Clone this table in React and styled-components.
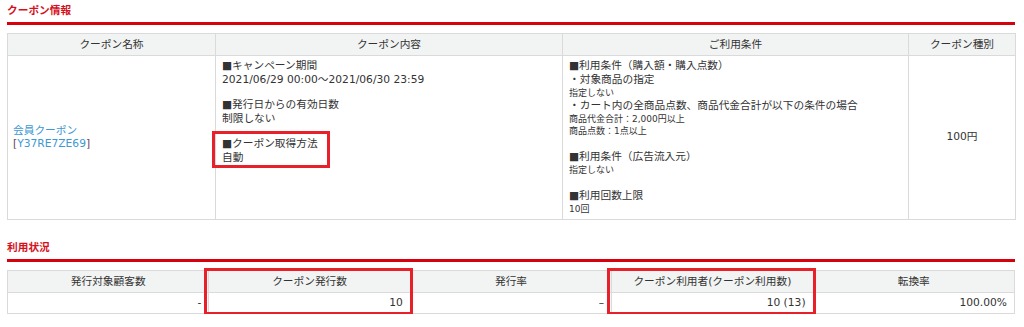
import React from "react";
import styled, { createGlobalStyle, css } from "styled-components";

const GlobalStyle = createGlobalStyle`
  html, body {
    margin: 0;
    background: #fff;
  }
  body {
    font-family: "DejaVu Sans", "Noto Sans CJK JP", sans-serif;
    color: #333;
  }
`;

const Page = styled.div`
  width: 1008px;
  padding: 4px 0 0 7px;
`;

const SectionTitle = styled.h2`
  margin: ${(p) => (p.$first ? "0" : "21px 0 0")};
  padding-bottom: 4px;
  border-bottom: 3px solid #d9000d;
  color: #d5101b;
  font-size: 10.7px;
  font-weight: bold;
  line-height: 14px;
`;

const Table = styled.table`
  width: 100%;
  margin-top: 8px;
  border-collapse: collapse;
  table-layout: fixed;
  font-size: 10.7px;
`;

const Col = styled.col`
  width: ${(p) => p.$w};
`;

const markBox = css`
  position: relative;
  &::after {
    content: "";
    position: absolute;
    left: -5px;
    right: -3px;
    border: 3px solid #e8202a;
    pointer-events: none;
  }
`;

const Th = styled.th`
  height: 21px;
  padding: 0 5px;
  background: #f2f3f3;
  border: 1px solid #dadada;
  font-weight: normal;
  text-align: center;
  vertical-align: middle;
  line-height: 14px;
  ${(p) =>
    p.$mark &&
    css`
      ${markBox}
      &::after {
        top: -3px;
        bottom: -1px;
        border-bottom: none;
      }
    `}
`;

const Td = styled.td`
  padding: ${(p) => p.$pad || "3px 6px 4px"};
  border: 1px solid #dadada;
  text-align: ${(p) => p.$align || "left"};
  vertical-align: ${(p) => p.$valign || "top"};
  line-height: 14px;
  ${(p) =>
    p.$mark &&
    css`
      ${markBox}
      &::after {
        top: 0;
        bottom: -2px;
        border-top: none;
      }
    `}
`;

const Block = styled.div`
  line-height: ${(p) => p.$lh || "13.5px"};
  margin-bottom: ${(p) => p.$gap || "12px"};
  &:last-child {
    margin-bottom: 0;
  }
  ${(p) =>
    p.$mark &&
    css`
      display: inline-block;
      position: relative;
      &::after {
        content: "";
        position: absolute;
        top: -6px;
        left: -10px;
        right: -12px;
        bottom: -4px;
        border: 3px solid #e8202a;
        pointer-events: none;
      }
    `}
`;

const Line = styled.div`
  font-size: ${(p) => (p.$small ? "9px" : "10.7px")};
  line-height: ${(p) => (p.$small ? "12px" : "14px")};
`;

const CouponLink = styled.a`
  color: #3d98d3;
  text-decoration: none;
`;

const Bracket = styled.span`
  color: #6a4258;
`;

const NameCell = styled.div`
  line-height: 13px;
`;

const usage = [
  { head: "発行対象顧客数", value: "-" },
  { head: "クーポン発行数", value: "10", mark: true },
  { head: "発行率", value: "–" },
  { head: "クーポン利用者(クーポン利用数)", value: "10 (13)", mark: true },
  { head: "転換率", value: "100.00%" },
];

export default function App() {
  return (
    <>
      <GlobalStyle />
      <Page>
        <SectionTitle $first>クーポン情報</SectionTitle>
        <Table>
          <colgroup>
            <Col $w="208px" />
            <Col $w="347px" />
            <Col $w="346px" />
            <Col $w="107px" />
          </colgroup>
          <thead>
            <tr>
              <Th>クーポン名称</Th>
              <Th>クーポン内容</Th>
              <Th>ご利用条件</Th>
              <Th>クーポン種別</Th>
            </tr>
          </thead>
          <tbody>
            <tr>
              <Td $valign="middle" $pad="3px 5px 4px">
                <NameCell>
                  <CouponLink href="#">会員クーポン</CouponLink>
                  <br />
                  <Bracket>[</Bracket>
                  <CouponLink href="#">Y37RE7ZE69</CouponLink>
                  <Bracket>]</Bracket>
                </NameCell>
              </Td>
              <Td>
                <Block>
                  ■キャンペーン期間
                  <br />
                  2021/06/29 00:00～2021/06/30 23:59
                </Block>
                <Block>
                  ■発行日からの有効日数
                  <br />
                  制限しない
                </Block>
                <Block $mark>
                  ■クーポン取得方法
                  <br />
                  自動
                </Block>
              </Td>
              <Td>
                <Block $lh="14px" $gap="13px">
                  <Line>■利用条件（購入額・購入点数）</Line>
                  <Line>・対象商品の指定</Line>
                  <Line $small>指定しない</Line>
                  <Line>・カート内の全商品点数、商品代金合計が以下の条件の場合</Line>
                  <Line $small>商品代金合計：2,000円以上</Line>
                  <Line $small>商品点数：1点以上</Line>
                </Block>
                <Block $lh="14px" $gap="13px">
                  <Line>■利用条件（広告流入元）</Line>
                  <Line $small>指定しない</Line>
                </Block>
                <Block $lh="14px" $gap="13px">
                  <Line>■利用回数上限</Line>
                  <Line $small>10回</Line>
                </Block>
              </Td>
              <Td $align="center" $valign="middle">
                100円
              </Td>
            </tr>
          </tbody>
        </Table>

        <SectionTitle>利用状況</SectionTitle>
        <Table>
          <thead>
            <tr>
              {usage.map((u) => (
                <Th key={u.head} $mark={u.mark}>
                  {u.head}
                </Th>
              ))}
            </tr>
          </thead>
          <tbody>
            <tr>
              {usage.map((u) => (
                <Td
                  key={u.head}
                  $mark={u.mark}
                  $align="right"
                  $valign="middle"
                  $pad="3px 7px 3px 5px"
                >
                  {u.value}
                </Td>
              ))}
            </tr>
          </tbody>
        </Table>
      </Page>
    </>
  );
}
